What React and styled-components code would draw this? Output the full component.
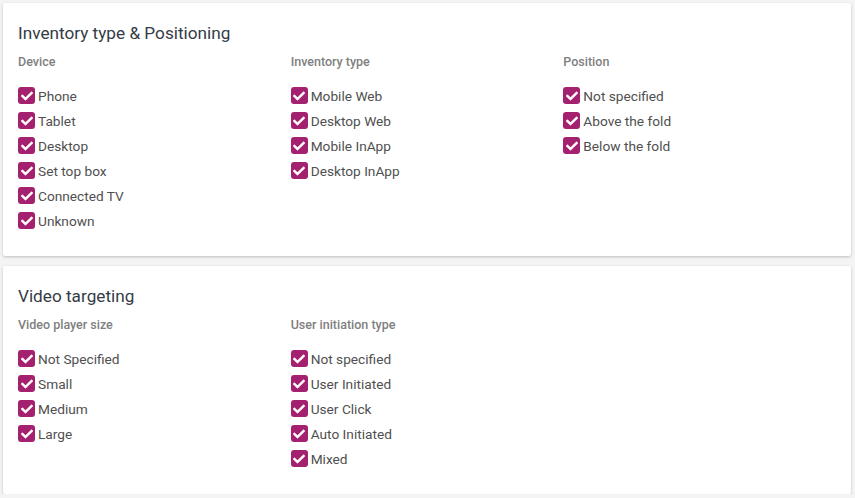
import React from "react";
import styled, { createGlobalStyle } from "styled-components";
import { FaCheck } from "react-icons/fa";

const GlobalStyle = createGlobalStyle`
  body {
    margin: 0;
    padding: 3px 4px 0 3px;
    background: #f4f4f4;
    font-family: Roboto, "Liberation Sans", Arial, sans-serif;
  }
`;

const Page = styled.div`
  display: flex;
  flex-direction: column;
  gap: 10px;
`;

const Card = styled.section`
  background: #fff;
  box-shadow: 0 1px 3px rgba(0, 0, 0, 0.22);
  border-radius: 2px;
  padding: 18px 15px 23px;
`;

const CardTitle = styled.h2`
  margin: 0 0 9px;
  font-size: 17.2px;
  line-height: 24px;
  font-weight: 400;
  color: #353b45;
`;

const Columns = styled.div`
  display: grid;
  grid-template-columns: repeat(3, 1fr);
`;

const Column = styled.div`
  display: flex;
  flex-direction: column;
`;

const Label = styled.div`
  font-size: 12.5px;
  line-height: 16px;
  font-weight: 500;
  color: #808080;
  margin-bottom: 13px;
`;

const Option = styled.label`
  display: flex;
  align-items: center;
  gap: 3px;
  height: 25px;
  font-size: 13.7px;
  color: #4f4f4f;
`;

const Box = styled.span`
  width: 17px;
  height: 17px;
  border-radius: 3px;
  background: #a4216f;
  color: #fff;
  display: flex;
  align-items: center;
  justify-content: center;
  flex-shrink: 0;
`;

const Check = ({ children }) => (
  <Option>
    <Box>
      <FaCheck size={12} />
    </Box>
    {children}
  </Option>
);

const sections = [
  {
    title: "Inventory type & Positioning",
    groups: [
      {
        label: "Device",
        items: ["Phone", "Tablet", "Desktop", "Set top box", "Connected TV", "Unknown"]
      },
      {
        label: "Inventory type",
        items: ["Mobile Web", "Desktop Web", "Mobile InApp", "Desktop InApp"]
      },
      {
        label: "Position",
        items: ["Not specified", "Above the fold", "Below the fold"]
      }
    ]
  },
  {
    title: "Video targeting",
    groups: [
      {
        label: "Video player size",
        items: ["Not Specified", "Small", "Medium", "Large"]
      },
      {
        label: "User initiation type",
        items: ["Not specified", "User Initiated", "User Click", "Auto Initiated", "Mixed"]
      }
    ]
  }
];

export default function App() {
  return (
    <>
      <GlobalStyle />
      <Page>
        {sections.map(section => (
          <Card key={section.title}>
            <CardTitle>{section.title}</CardTitle>
            <Columns>
              {section.groups.map(group => (
                <Column key={group.label}>
                  <Label>{group.label}</Label>
                  {group.items.map(item => (
                    <Check key={item}>{item}</Check>
                  ))}
                </Column>
              ))}
            </Columns>
          </Card>
        ))}
      </Page>
    </>
  );
}
